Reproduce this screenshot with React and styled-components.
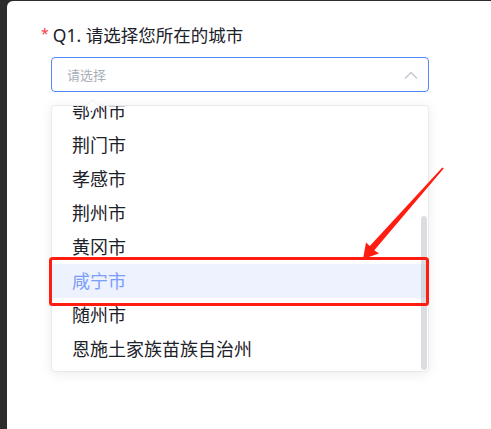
import { useLayoutEffect, useRef } from 'react'
import styled, { createGlobalStyle } from 'styled-components'

const GlobalStyle = createGlobalStyle`
    html, body {
        margin: 0;
        padding: 0;
        background: #2c2c2c;
    }
    body {
        font-family: "Noto Sans", "Noto Sans CJK SC", sans-serif;
    }
`

const Page = styled('div')`
    position: relative;
    width: 491px;
    height: 429px;
    overflow: hidden;
    padding: 1px 0 0 7px;
    box-sizing: border-box;
`

const Panel = styled('div')`
    height: 428px;
    background: #fff;
    border-top-left-radius: 6px;
    padding: 22px 0 0 34px;
    box-sizing: border-box;
`

const Title = styled('div')`
    display: flex;
    align-items: center;
    height: 24px;
    line-height: 24px;
    font-size: 17.5px;
    color: #1d2129;
`

const Required = styled('span')`
    color: #f53f3f;
    font-size: 14px;
    margin-right: 4px;
    position: relative;
    top: -1px;
`

const Field = styled('div')`
    margin-left: 10px;
    width: 378px;
`

const Trigger = styled('div')`
    display: flex;
    align-items: center;
    justify-content: space-between;
    height: 35px;
    margin-top: 10px;
    padding: 0 10px 0 15px;
    box-sizing: border-box;
    border: 1px solid #5088f7;
    border-radius: 4px;
    font-size: 13px;
    color: #a9aeb8;
`

const Dropdown = styled('div')`
    position: relative;
    margin-top: 13px;
    height: 267px;
    border: 1px solid #e8e9ee;
    border-radius: 4px;
    box-shadow: 0 2px 12px rgba(0, 0, 0, 0.08);
    background: #fff;
    box-sizing: border-box;
`

const PopArrow = styled('div')`
    position: absolute;
    top: -5px;
    left: 36px;
    width: 8px;
    height: 8px;
    background: #fff;
    border-left: 1px solid #eceef2;
    border-top: 1px solid #eceef2;
    transform: rotate(45deg);
`

const Viewport = styled('div')`
    height: 100%;
    overflow: hidden;
    border-radius: 4px;
`

const List = styled('ul')`
    list-style: none;
    margin: 0;
    padding: 6px 0 5px;
`

const Option = styled('li')`
    height: 34px;
    line-height: 34px;
    padding-left: 20px;
    margin-right: 1px;
    font-size: 18px;
    color: ${p => (p.$active ? '#7c9cfa' : '#1d2129')};
    background: ${p => (p.$active ? '#edf2fe' : 'transparent')};
    white-space: nowrap;
`

const Thumb = styled('div')`
    position: absolute;
    right: 1px;
    bottom: 1px;
    width: 6px;
    height: 154px;
    border-radius: 3px;
    background: rgba(190, 193, 200, 0.55);
`

const Annotation = styled('svg')`
    position: absolute;
    left: 0;
    top: 0;
    pointer-events: none;
`

const cities = [
    '武汉市', '黄石市', '十堰市', '宜昌市', '襄阳市', '鄂州市', '荆门市',
    '孝感市', '荆州市', '黄冈市', '咸宁市', '随州市', '恩施土家族苗族自治州',
]

function ChevronUp() {
    return (
        <svg width="14" height="8" viewBox="0 0 14 8" fill="none">
            <path d="M1 7.5 L7 1.5 L13 7.5" stroke="#c2c6ce" strokeWidth="1.3" />
        </svg>
    )
}

function CitySelect() {
    const viewportRef = useRef(null)

    useLayoutEffect(() => {
        const el = viewportRef.current
        if (el) el.scrollTop = el.scrollHeight
    }, [])

    return (
        <Field>
            <Trigger>
                <span>请选择</span>
                <ChevronUp />
            </Trigger>
            <Dropdown>
                <PopArrow />
                <Viewport ref={viewportRef}>
                    <List>
                        {cities.map(c => (
                            <Option key={c} $active={c === '咸宁市'}>{c}</Option>
                        ))}
                    </List>
                </Viewport>
                <Thumb />
            </Dropdown>
        </Field>
    )
}

export default function App() {
    return (
        <>
            <GlobalStyle />
            <Page>
                <Panel>
                    <Title>
                        <Required>*</Required>
                        Q1. 请选择您所在的城市
                    </Title>
                    <CitySelect />
                </Panel>
                <Annotation width="491" height="429" viewBox="0 0 491 429">
                    <rect x="50.5" y="258.5" width="377" height="46" rx="2" fill="none" stroke="#ff1d12" strokeWidth="3" />
                    <polygon
                        fill="#ff1d12"
                        points="442.3,167.4 443.7,168.6 374.3,250.2 379,253.4 363,259 366,242.6 369.8,246"
                    />
                </Annotation>
            </Page>
        </>
    )
}
